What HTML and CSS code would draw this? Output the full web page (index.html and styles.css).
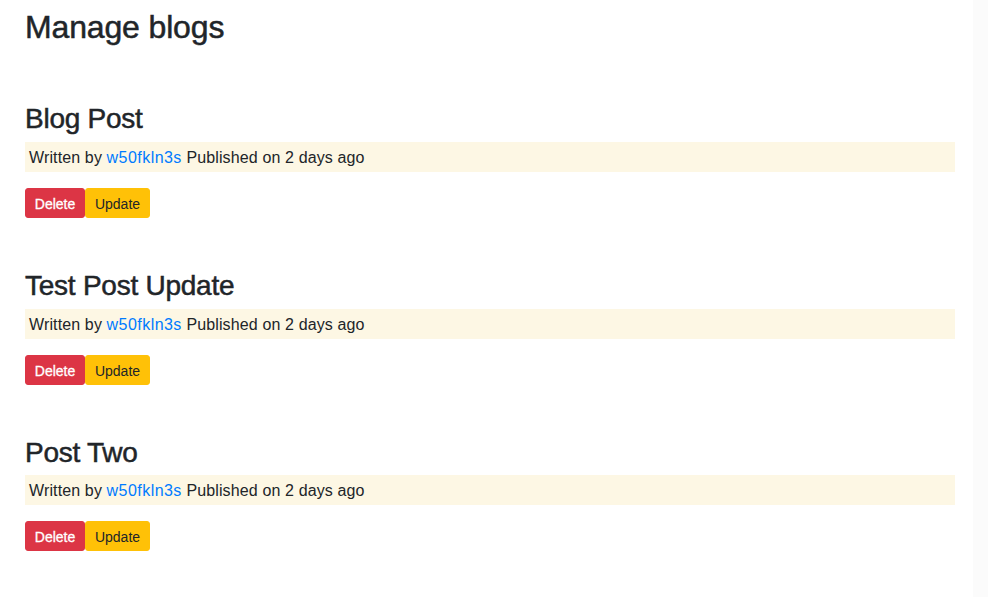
FILE: index.html
```html
<!DOCTYPE html>
<html lang="en">
<head>
<meta charset="utf-8">
<title>Manage blogs</title>
<link rel="stylesheet" href="styles.css">
</head>
<body>
<div class="page">
  <main class="content">
    <h2 class="page-title">Manage blogs</h2>
    <section class="post">
      <h3 class="post-title">Blog Post</h3>
      <p class="meta">Written by <a class="author" href="#">w50fkln3s</a> Published on 2 days ago</p>
      <div class="actions">
        <button class="btn btn-danger">Delete</button><button class="btn btn-warning">Update</button>
      </div>
    </section>
    <section class="post">
      <h3 class="post-title">Test Post Update</h3>
      <p class="meta">Written by <a class="author" href="#">w50fkln3s</a> Published on 2 days ago</p>
      <div class="actions">
        <button class="btn btn-danger">Delete</button><button class="btn btn-warning">Update</button>
      </div>
    </section>
    <section class="post">
      <h3 class="post-title">Post Two</h3>
      <p class="meta">Written by <a class="author" href="#">w50fkln3s</a> Published on 2 days ago</p>
      <div class="actions">
        <button class="btn btn-danger">Delete</button><button class="btn btn-warning">Update</button>
      </div>
    </section>
  </main>
  <div class="edge"></div>
</div>
</body>
</html>
```
FILE: styles.css
```css
html, body {
  margin: 0;
  padding: 0;
  height: 100%;
}
body {
  font-family: "Liberation Sans", Arial, sans-serif;
  color: #212529;
  background: #fff;
}
.page {
  display: flex;
  min-height: 100%;
}
.content {
  flex: 1;
  padding: 8px 18px 0 25px;
}
.edge {
  width: 15px;
  background: #fbfbfb;
}
.page-title {
  margin: 0 0 55px;
  font-size: 32px;
  font-weight: 400;
  line-height: 1.2;
  letter-spacing: -0.15px;
  -webkit-text-stroke: 0.5px currentColor;
}
.post {
  margin-bottom: 50px;
}
.post-title {
  margin: 0 0 7px;
  padding-top: 2px;
  line-height: 31.6px;
  font-size: 28px;
  font-weight: 400;
  letter-spacing: -0.25px;
  -webkit-text-stroke: 0.5px currentColor;
}
.meta {
  margin: 0 0 16px;
  padding: 4px 4px 2px;
  font-size: 16px;
  line-height: 24px;
  letter-spacing: 0.13px;
  background: #fdf7e4;
}
.author {
  color: #007bff;
  text-decoration: none;
  letter-spacing: 0.45px;
}
.actions {
  display: flex;
}
.btn {
  font-family: inherit;
  font-size: 14px;
  line-height: 20px;
  padding: 5px 0 3px;
  border: 1px solid transparent;
  border-radius: 3px;
  cursor: pointer;
  text-align: center;
}
.btn-danger {
  background: #dc3545;
  border-color: #dc3545;
  color: #fff;
  width: 60px;
  -webkit-text-stroke: 0.3px currentColor;
}
.btn-warning {
  background: #ffc107;
  border-color: #ffc107;
  color: #212529;
  width: 65px;
}
```
